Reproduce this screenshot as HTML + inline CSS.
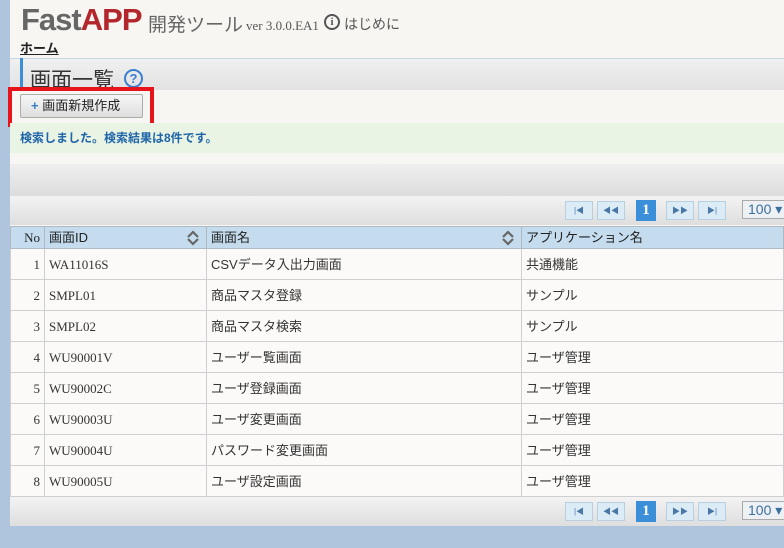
<!DOCTYPE html>
<html><head><meta charset="utf-8"><style>
*{margin:0;padding:0;box-sizing:border-box}
body{width:784px;height:548px;overflow:hidden;background:#afc5dd;font-family:"Liberation Sans","Noto Sans CJK JP",sans-serif;position:relative}
.main{position:absolute;left:10px;top:0;width:774px;height:526px;background:#f7f6f3}
.abs{position:absolute}
.logo{left:11px;top:2px;font-size:31px;font-weight:bold;letter-spacing:-1px}
.pg{height:29px;background:linear-gradient(#f3f3f3,#dedede)}
.pb{position:absolute;top:5px;width:28px;height:19px;background:#dcecf7;border:1px solid #b8cfe0;font-size:8px;color:#4a78a6;text-align:center;line-height:17px}
.p1{position:absolute;top:4px;left:626px;width:20px;height:21px;background:#3a8fd8;color:#fff;font-family:"Liberation Serif",serif;font-size:15px;font-weight:bold;text-align:center;line-height:21px}
.sel{position:absolute;top:4px;left:732px;width:50px;height:19px;border:1px solid #aaa;background:#eef1f4;color:#3a6fa0;font-size:14px;padding-left:5px;line-height:17px}
table{border-collapse:collapse;table-layout:fixed;width:774px;position:absolute;left:0;top:226px;font-size:13px;color:#333;line-height:15px}
th{background:#c4dcee;height:22px;text-align:left;font-weight:normal;border:1px solid #b0b8c0;padding:0 0 0 4px;color:#222;position:relative}
td{height:31px;border:1px solid #cfcfcf;padding:0 0 0 4px;background:#fbfaf8;white-space:nowrap}
td.n{text-align:right;padding-right:4px;padding-left:0;font-family:"Liberation Serif",serif}
td.id{font-family:"Liberation Serif",serif}
.sort{position:absolute;right:6px;top:3px}
</style></head><body>
<div class="main">
<div class="abs logo"><span style="color:#666">Fast</span><span style="color:#b3262b">APP</span></div>
<div class="abs" style="left:138px;top:10px;font-size:19px;color:#666">開発ツール</div>
<div class="abs" style="left:236px;top:18px;font-size:13px;color:#555;font-family:'Liberation Serif',serif">ver 3.0.0.EA1</div>
<div class="abs" style="left:314px;top:14px;width:16px;height:16px;border:2px solid #555;border-radius:50%;font-size:11px;font-weight:bold;color:#555;text-align:center;line-height:12px;font-family:'Liberation Serif',serif">i</div>
<div class="abs" style="left:334px;top:14px;font-size:14px;color:#555">はじめに</div>
<div class="abs" style="left:10px;top:38px;font-size:13px;font-weight:bold;color:#222;text-decoration:underline">ホーム</div>
<div class="abs" style="left:0;top:58px;width:774px;height:32px;background:linear-gradient(#f0f0f0,#e2e2e2);border-top:1px solid #c8d6e4"></div>
<div class="abs" style="left:10px;top:58px;width:3px;height:32px;background:#3a8fd8"></div>
<div class="abs" style="left:20px;top:64px;font-size:21px;color:#333">画面一覧</div>
<div class="abs" style="left:114px;top:69px;width:19px;height:19px;border:2px solid #3a7fd0;border-radius:50%;color:#3a7fd0;font-weight:bold;font-size:13px;text-align:center;line-height:15px">?</div>
<div class="abs" style="left:-2px;top:87px;width:146px;height:40px;border:4px solid #e8141c"></div>
<div class="abs" style="left:10px;top:94px;width:123px;height:24px;border:1px solid #aaa;border-radius:2px;background:linear-gradient(#f6f6f6,#dedede);font-size:13px;color:#222;line-height:22px;padding-left:10px"><span style="color:#3a7fc0;font-weight:bold">+</span> 画面新規作成</div>
<div class="abs" style="left:0;top:123px;width:774px;height:30px;background:#eaf4e5;color:#1e64a8;font-size:12px;font-weight:bold;padding:6px 0 0 10px">検索しました。検索結果は8件です。</div>
<div class="abs" style="left:0;top:164px;width:774px;height:32px;background:linear-gradient(#efefef,#dcdcdc)"></div>
<div class="abs pg" style="left:0;top:196px;width:774px">
<div class="pb" style="left:555px">|◀</div><div class="pb" style="left:587px">◀◀</div><div class="p1">1</div><div class="pb" style="left:656px">▶▶</div><div class="pb" style="left:688px">▶|</div><div class="sel">100 ▾</div></div>
<table>
<colgroup><col style="width:34px"><col style="width:162px"><col style="width:315px"><col></colgroup>
<tr><th style="text-align:right;padding-right:4px;font-family:'Liberation Serif',serif">No</th><th>画面ID<svg class="sort" width="14" height="16" viewBox="0 0 14 16"><path d="M2 7L7 2L12 7M2 9L7 14L12 9" fill="none" stroke="#666" stroke-width="2.2"/></svg></th><th>画面名<svg class="sort" width="14" height="16" viewBox="0 0 14 16"><path d="M2 7L7 2L12 7M2 9L7 14L12 9" fill="none" stroke="#666" stroke-width="2.2"/></svg></th><th>アプリケーション名</th></tr>
<tr><td class="n">1</td><td class="id">WA11016S</td><td>CSVデータ入出力画面</td><td>共通機能</td></tr>
<tr><td class="n">2</td><td class="id">SMPL01</td><td>商品マスタ登録</td><td>サンプル</td></tr>
<tr><td class="n">3</td><td class="id">SMPL02</td><td>商品マスタ検索</td><td>サンプル</td></tr>
<tr><td class="n">4</td><td class="id">WU90001V</td><td>ユーザー覧画面</td><td>ユーザ管理</td></tr>
<tr><td class="n">5</td><td class="id">WU90002C</td><td>ユーザ登録画面</td><td>ユーザ管理</td></tr>
<tr><td class="n">6</td><td class="id">WU90003U</td><td>ユーザ変更画面</td><td>ユーザ管理</td></tr>
<tr><td class="n">7</td><td class="id">WU90004U</td><td>パスワード変更画面</td><td>ユーザ管理</td></tr>
<tr><td class="n">8</td><td class="id">WU90005U</td><td>ユーザ設定画面</td><td>ユーザ管理</td></tr>
</table>
<div class="abs pg" style="left:0;top:497px;width:774px">
<div class="pb" style="left:555px">|◀</div><div class="pb" style="left:587px">◀◀</div><div class="p1">1</div><div class="pb" style="left:656px">▶▶</div><div class="pb" style="left:688px">▶|</div><div class="sel">100 ▾</div></div>
</div>
</body></html>
